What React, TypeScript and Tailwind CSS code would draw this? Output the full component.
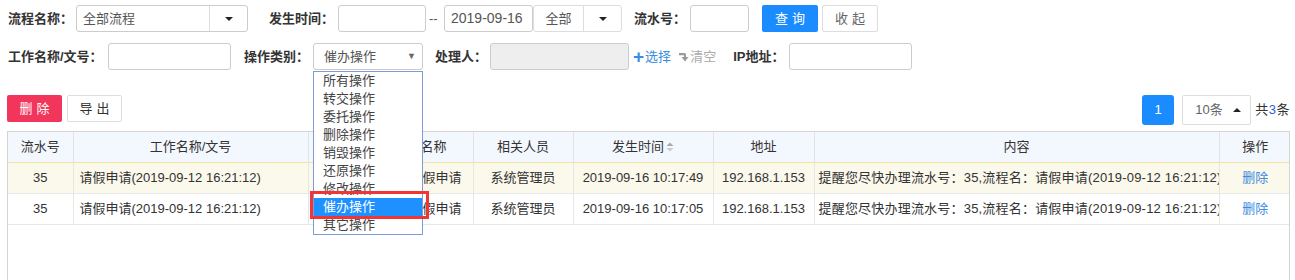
import React from "react"

const font = { fontFamily: '"Liberation Sans", "Noto Sans CJK SC", sans-serif' }

const options = ["所有操作", "转交操作", "委托操作", "删除操作", "销毁操作", "还原操作", "修改操作", "催办操作", "其它操作"]

const rows = [
  { id: "35", name: "请假申请(2019-09-12 16:21:12)", flow: "请假申请", user: "系统管理员", time: "2019-09-16 10:17:49", ip: "192.168.1.153" },
  { id: "35", name: "请假申请(2019-09-12 16:21:12)", flow: "请假申请", user: "系统管理员", time: "2019-09-16 10:17:05", ip: "192.168.1.153" },
]

function Caret() {
  return <span className="inline-block h-0 w-0 border-x-[4px] border-t-[4px] border-x-transparent border-t-[#222]" />
}

function Label({ children, w }: { children: React.ReactNode; w: string }) {
  return <span className={`${w} shrink-0 font-bold text-[#333]`}>{children}</span>
}

function Input({ w, disabled }: { w: string; disabled?: boolean }) {
  return (
    <div
      className={`${w} h-[27px] shrink-0 rounded-[3px] border border-[#ccc] ${disabled ? "bg-[#eee]" : "bg-white"}`}
    />
  )
}

export default function App() {
  return (
    <div className="relative h-[280px] w-[1295px] overflow-hidden bg-white text-[13px] text-[#333]" style={font}>
      {/* search row 1 */}
      <div className="mt-[5px] flex h-[27px] items-center pl-[8px]">
        <Label w="w-[68px]">流程名称：</Label>
        <div className="flex h-[27px] w-[172px] shrink-0 rounded-[3px] border border-[#ccc]">
          <div className="flex w-[133px] items-center border-r border-[#ddd] pl-[6px] text-[#555]">全部流程</div>
          <div className="flex flex-1 items-center justify-center">
            <Caret />
          </div>
        </div>
        <span className="ml-[21px]">
          <Label w="w-[69px] inline-block">发生时间：</Label>
        </span>
        <Input w="w-[88px]" />
        <span className="w-[18px] shrink-0 pl-[3px] text-[#555]">--</span>
        <div className="flex h-[27px] w-[89px] shrink-0 items-center rounded-[3px] border border-[#ccc] pl-[6px] text-[14px] text-[#555]">
          2019-09-16
        </div>
        <div className="flex h-[27px] w-[89px] shrink-0 rounded-[3px] border border-[#ddd]">
          <div className="flex w-[50px] items-center justify-center border-r border-[#ddd] text-[#555]">全部</div>
          <div className="flex flex-1 items-center justify-center">
            <Caret />
          </div>
        </div>
        <span className="ml-[12px]">
          <Label w="w-[56px] inline-block">流水号：</Label>
        </span>
        <Input w="w-[59px]" />
        <button className="ml-[13px] h-[27px] w-[56px] shrink-0 rounded-[2px] bg-[#1a8cff] pl-[4px] tracking-[4px] text-white">
          查询
        </button>
        <button className="ml-[4px] h-[27px] w-[56px] shrink-0 rounded-[2px] border border-[#ddd] bg-white pl-[4px] tracking-[4px] text-[#666]">
          收起
        </button>
      </div>

      {/* search row 2 */}
      <div className="mt-[11px] flex h-[27px] items-center pl-[8px]">
        <Label w="w-[100px]">工作名称/文号：</Label>
        <Input w="w-[123px]" />
        <span className="ml-[13px]">
          <Label w="w-[69px] inline-block">操作类别：</Label>
        </span>
        <div className="flex h-[27px] w-[110px] shrink-0 items-center justify-between rounded-[3px] border border-[#ccc] pl-[10px] pr-[6px] text-[#555]">
          <span>催办操作</span>
          <span className="text-[9px] text-[#666]">▼</span>
        </div>
        <span className="ml-[12px]">
          <Label w="w-[55px] inline-block">处理人：</Label>
        </span>
        <Input w="w-[139px]" disabled />
        <span className="ml-[4px] flex items-center text-[#3c8dde]">
          <span className="text-[19px] font-bold leading-none">+</span>
          <span className="ml-[1px]">选择</span>
        </span>
        <span className="ml-[8px] flex items-center text-[#aaa]">
          <svg width="10" height="11" viewBox="0 0 10 11">
            <path d="M0 2h5.5a1.5 1.5 0 0 1 1.5 1.5V6H9.5L6 10.5 2.5 6H5V4.2H0z" fill="#999" />
          </svg>
          <span className="ml-[1px]">清空</span>
        </span>
        <span className="ml-[17px]">
          <Label w="w-[56px] inline-block">IP地址：</Label>
        </span>
        <Input w="w-[123px]" />
      </div>

      {/* toolbar */}
      <div className="mt-[25px] flex items-start justify-between pl-[7px] pr-[5px]">
        <div className="flex gap-[5px]">
          <button className="h-[27px] w-[55px] rounded-[2px] bg-[#f2355b] pl-[4px] tracking-[4px] text-white">删除</button>
          <button className="h-[27px] w-[55px] rounded-[2px] border border-[#ddd] bg-white pl-[4px] tracking-[4px] text-[#333]">
            导出
          </button>
        </div>
        <div className="flex items-center">
          <button className="h-[30px] w-[32px] rounded-[3px] bg-[#1a8cff] text-white">1</button>
          <div className="ml-[8px] flex h-[30px] w-[69px] items-center rounded-[2px] border border-[#ddd] pl-[12px] text-[#666]">
            10条
            <span className="ml-[10px] inline-block h-0 w-0 border-x-[4px] border-b-[4px] border-x-transparent border-b-[#222]" />
          </div>
          <span className="ml-[4px] tracking-[0.5px] text-[#333]">
            共<span className="text-[#2a5fe0]">3</span>条
          </span>
        </div>
      </div>

      {/* table */}
      <div className="ml-[7px] mr-[5px] mt-[6px] h-[160px] overflow-hidden border border-[#d4d4d4]">
        <table className="w-full table-fixed border-collapse">
          <colgroup>
            <col className="w-[65px]" />
            <col className="w-[235px]" />
            <col className="w-[165px]" />
            <col className="w-[100px]" />
            <col className="w-[140px]" />
            <col className="w-[101px]" />
            <col className="w-[405px]" />
            <col className="w-[72px]" />
          </colgroup>
          <thead>
            <tr className="h-[30px] bg-[#f3f8fe] text-[#333]">
              <th className="border-r border-[#e3e3e3] font-normal">流水号</th>
              <th className="border-r border-[#e3e3e3] font-normal">工作名称/文号</th>
              <th className="border-r border-[#e3e3e3] pr-[26px] text-right font-normal">流程名称</th>
              <th className="border-r border-[#e3e3e3] font-normal">相关人员</th>
              <th className="border-r border-[#e3e3e3] font-normal">
                <span className="inline-flex items-center">
                  发生时间
                  <svg className="ml-[2px]" width="8" height="10" viewBox="0 0 8 10">
                    <path d="M4 0.5 7.5 4H0.5z" fill="#aaa" />
                    <path d="M4 9.5 7.5 6H0.5z" fill="#ccc" />
                  </svg>
                </span>
              </th>
              <th className="border-r border-[#e3e3e3] font-normal">地址</th>
              <th className="border-r border-[#e3e3e3] font-normal">内容</th>
              <th className="font-normal">操作</th>
            </tr>
          </thead>
          <tbody>
            {rows.map((r, i) => (
              <tr
                key={i}
                className={`h-[31px] border-b border-[#e8e8e8] ${
                  i === 0 ? "border-t border-t-[#f3e3a0] bg-[#fbf8ec]" : "bg-white"
                }`}
              >
                <td className="border-r border-[#e6e6e6] text-center">{r.id}</td>
                <td className="whitespace-nowrap border-r border-[#e6e6e6] pl-[6px]">{r.name}</td>
                <td className="border-r border-[#e6e6e6] pr-[11px] text-right">{r.flow}</td>
                <td className="border-r border-[#e6e6e6] text-center">{r.user}</td>
                <td className="overflow-hidden whitespace-nowrap border-r border-[#e6e6e6] text-center">{r.time}</td>
                <td className="overflow-hidden whitespace-nowrap border-r border-[#e6e6e6] text-center">{r.ip}</td>
                <td className="overflow-hidden whitespace-nowrap border-r border-[#e6e6e6] pl-[4px] tracking-[0.2px]">
                  提醒您尽快办理流水号：35,流程名：请假申请(2019-09-12 16:21:12)
                </td>
                <td className="text-center text-[#3c8dde]">删除</td>
              </tr>
            ))}
          </tbody>
        </table>
      </div>

      {/* open select list */}
      <div className="absolute left-[313px] top-[71px] w-[110px] border border-[#7d9cd8] bg-white">
        {options.map((o) => (
          <div
            key={o}
            className={`flex h-[18px] items-center pl-[9px] ${
              o === "催办操作" ? "bg-[#1e90ff] text-white" : "text-[#444]"
            }`}
          >
            {o}
          </div>
        ))}
      </div>
      <div className="absolute left-[310px] top-[191px] h-[28px] w-[119px] border-[3px] border-[#ef3535]" />
    </div>
  )
}
